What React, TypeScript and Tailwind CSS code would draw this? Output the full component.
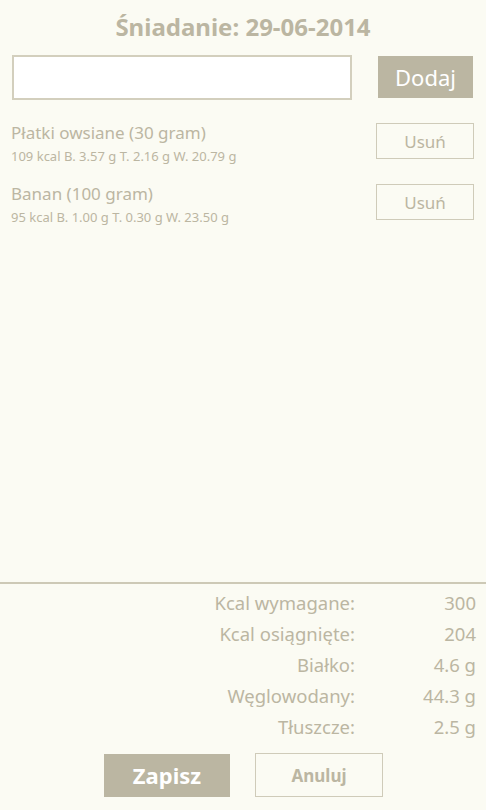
import React from "react";

const items = [
  { name: "Płatki owsiane (30 gram)", info: "109 kcal B. 3.57 g T. 2.16 g W. 20.79 g" },
  { name: "Banan (100 gram)", info: "95 kcal B. 1.00 g T. 0.30 g W. 23.50 g" },
];

const summary = [
  ["Kcal wymagane:", "300"],
  ["Kcal osiągnięte:", "204"],
  ["Białko:", "4.6 g"],
  ["Węglowodany:", "44.3 g"],
  ["Tłuszcze:", "2.5 g"],
];

export default function App() {
  return (
    <div
      className="h-[810px] w-[486px] bg-[#fbfbf3] text-[#bbb6a2] flex flex-col"
      style={{ fontFamily: '"Noto Sans", "Open Sans", sans-serif' }}
    >
      <h1 className="pt-[10px] h-[54px] text-center text-[24px] font-bold leading-[34px]">
        Śniadanie: 29-06-2014
      </h1>

      <div className="flex items-center pl-[12px] pr-[13px] h-[46px]">
        <div className="w-[340px] h-[45px] bg-white border-2 border-[#d3cfbd]" />
        <button className="ml-auto w-[95px] h-[42px] bg-[#bbb6a2] text-white text-[22px] leading-none">
          Dodaj
        </button>
      </div>

      <div className="flex-1 pt-[22px] flex flex-col">
        {items.map((it) => (
          <div key={it.name} className="flex items-start pl-[11px] pr-[12px] h-[61px]">
            <div className="flex-1 flex flex-col">
              <span className="text-[17px] leading-[22px]">{it.name}</span>
              <span className="text-[13px] leading-[24px]">{it.info}</span>
            </div>
            <button className="mt-[1px] w-[98px] h-[36px] border border-[#cfcbb9] text-[17px] leading-none">
              Usuń
            </button>
          </div>
        ))}
      </div>

      <div className="h-[2px] bg-[#cdc9b6]" />

      <div className="pt-[3px] flex flex-col">
        {summary.map(([label, value]) => (
          <div key={label} className="flex h-[31px] items-center text-[18.5px]">
            <span className="w-[355px] text-right">{label}</span>
            <span className="w-[121px] text-right">{value}</span>
          </div>
        ))}
      </div>

      <div className="flex items-center pl-[104px] gap-[25px] pt-[11px] pb-[13px]">
        <button className="w-[126px] h-[43px] bg-[#bbb6a2] text-white text-[22px] font-bold leading-none">
          Zapisz
        </button>
        <button className="w-[128px] h-[44px] border border-[#cfcbb9] text-[17px] font-bold leading-none">
          Anuluj
        </button>
      </div>
    </div>
  );
}
